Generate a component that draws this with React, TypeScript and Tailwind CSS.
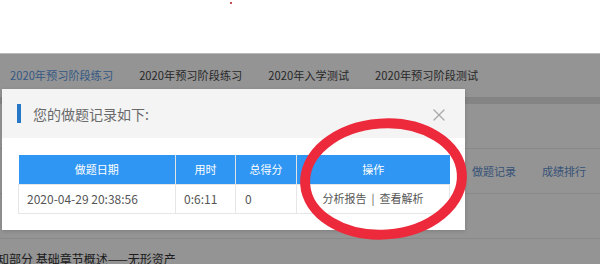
import { X } from "lucide-react";

const font = "font-['Microsoft_YaHei','Noto_Sans_CJK_SC','Noto_Sans',sans-serif]";

const tabs = ["2020年预习阶段练习", "2020年预习阶段练习", "2020年入学测试", "2020年预习阶段测试"];

function RecordTable() {
    return (
        <table className="w-[431px] table-fixed border-collapse text-[11px]">
            <colgroup>
                <col className="w-[157px]" />
                <col className="w-[60px]" />
                <col className="w-[61px]" />
                <col className="w-[153px]" />
            </colgroup>
            <thead>
                <tr className="h-[29px] bg-[#2f96f4] text-white">
                    <th className="border-r border-[#e3e3e3] font-normal">做题日期</th>
                    <th className="border-r border-[#e3e3e3] font-normal">用时</th>
                    <th className="border-r border-[#e3e3e3] font-normal">总得分</th>
                    <th className="font-normal">操作</th>
                </tr>
            </thead>
            <tbody>
                <tr className="h-[29px] text-[#555]">
                    <td className="border border-[#e6e6e6] pl-[8px] text-[12px]">2020-04-29 20:38:56</td>
                    <td className="border border-[#e6e6e6] pl-[8px] text-[12px]">0:6:11</td>
                    <td className="border border-[#e6e6e6] pl-[9px] text-[12px]">0</td>
                    <td className="border border-[#e6e6e6] text-center">
                        分析报告<span className="mx-[5px]">|</span>查看解析
                    </td>
                </tr>
            </tbody>
        </table>
    );
}

export default function App() {
    return (
        <div className={`relative w-[600px] h-[264px] overflow-hidden bg-white ${font}`}>
            {/* top strip */}
            <div className="relative h-[53px] bg-white">
                <span className="absolute left-[230px] top-[2px] w-[2px] h-[2px] rounded-full bg-[#b3141c]" />
            </div>
            <div className="h-px bg-[#b9b9b9]" />

            {/* dimmed page */}
            <div className="relative">
                <nav className="flex items-center h-[43px] pl-[10px] gap-[26px] text-[11.2px] text-[#484848]">
                    {tabs.map((t, i) => (
                        <span key={i} className={i === 0 ? "text-[#5c9ae4]" : ""}>
                            {t}
                        </span>
                    ))}
                </nav>
                <div className="h-[7px] bg-[#e4e4e4]" />
                <div className="h-[45px] border-b border-[#ececec]" />
                <div className="h-[45px] border-b border-[#ececec] flex items-center justify-end pr-[14px] gap-[26px] text-[11px] text-[#5f8fcf]">
                    <span>做题记录</span>
                    <span>成绩排行</span>
                </div>
                <div className="h-[45px] border-b border-[#ececec]" />
                <div className="h-[40px] pt-[13px] -ml-[3px] text-[12px] leading-[14px] text-[#333] whitespace-nowrap">
                    知部分 基础章节概述——无形资产
                </div>
                <div className="absolute inset-0 bg-black/[0.42]" />
            </div>

            {/* modal */}
            <div className="absolute left-[2px] top-[89px] w-[463px] bg-white shadow-[0_1px_4px_rgba(0,0,0,0.15)]">
                <div className="flex items-center h-[49px] bg-[#f4f4f4] pl-[15px] pr-[16px]">
                    <span className="w-[4px] h-[19px] bg-[#2777c9]" />
                    <span className="ml-[12px] pt-[2px] text-[14px] text-[#6a6a6a]">您的做题记录如下:</span>
                    <X className="ml-auto mt-[3px] w-[20px] h-[20px] text-[#a8a8a8]" strokeWidth={1.5} />
                </div>
                <div className="px-[16px] pt-[17px] pb-[16px]">
                    <RecordTable />
                </div>
            </div>

            {/* red annotation ellipse */}
            <svg className="absolute left-0 top-0 pointer-events-none" width="600" height="264">
                <ellipse
                    cx="383.5"
                    cy="179"
                    rx="78.5"
                    ry="55.5"
                    fill="none"
                    stroke="#ec2a3b"
                    strokeWidth="10"
                    transform="rotate(-4 383.5 179)"
                />
            </svg>
        </div>
    );
}
